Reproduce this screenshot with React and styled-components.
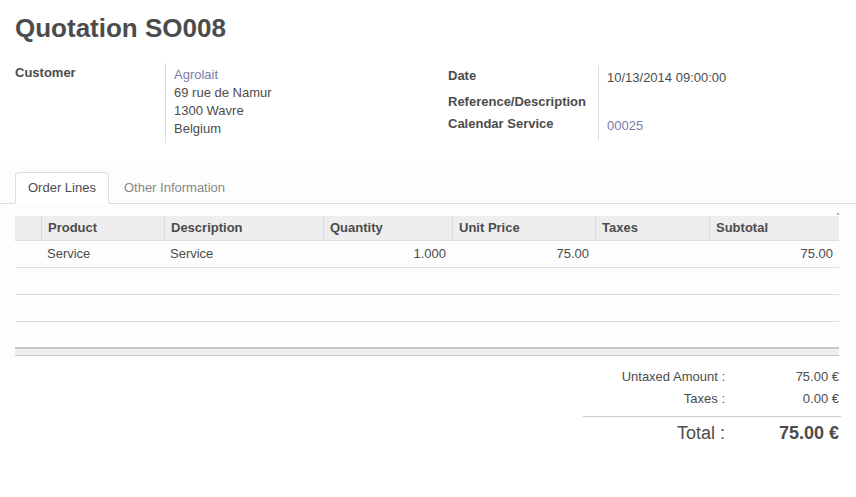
import React from 'react'
import styled, { createGlobalStyle } from 'styled-components'

const GlobalStyle = createGlobalStyle`
    body {
        margin: 0;
        background: #fff;
        color: #4c4c4c;
        font-family: "Liberation Sans", Arial, sans-serif;
        font-size: 13px;
    }
`

const columns = [
    { key: 'handle', label: '', width: 26 },
    { key: 'product', label: 'Product', width: 123 },
    { key: 'description', label: 'Description', width: 159 },
    { key: 'quantity', label: 'Quantity', width: 129, numeric: true },
    { key: 'price', label: 'Unit Price', width: 143, numeric: true },
    { key: 'taxes', label: 'Taxes', width: 114 },
    { key: 'subtotal', label: 'Subtotal', width: 130, numeric: true },
]

const lines = [
    { handle: '', product: 'Service', description: 'Service', quantity: '1.000', price: '75.00', taxes: '', subtotal: '75.00' },
]

const App = () => {
    return (
        <Sheet>
            <GlobalStyle />
            <Title>Quotation SO008</Title>

            <InfoGrid>
                <FieldGroup>
                    <Label>Customer</Label>
                    <Value>
                        <Link>Agrolait</Link>
                        <div>69 rue de Namur</div>
                        <div>1300 Wavre</div>
                        <div>Belgium</div>
                    </Value>
                </FieldGroup>
                <FieldGroup $offset={3}>
                    <Label>Date</Label>
                    <Value>10/13/2014 09:00:00</Value>
                    <Label>Reference/Description</Label>
                    <Value />
                    <Label>Calendar Service</Label>
                    <Value><Link>00025</Link></Value>
                </FieldGroup>
            </InfoGrid>

            <Notebook>
                <TabList>
                    <Tab $active>Order Lines</Tab>
                    <Tab>Other Information</Tab>
                </TabList>
                <TabContent>
                    <TableWrap>
                        <Table>
                            <colgroup>
                                {columns.map(col => <col key={col.key} style={{ width: col.width }} />)}
                            </colgroup>
                            <thead>
                                <tr>
                                    {columns.map((col, i) => (
                                        <HeadCell key={col.key} $first={i === 0}>{col.label}</HeadCell>
                                    ))}
                                </tr>
                            </thead>
                            <tbody>
                                {lines.map((line, r) => (
                                    <tr key={r}>
                                        {columns.map(col => (
                                            <Cell key={col.key} $numeric={col.numeric}>{line[col.key]}</Cell>
                                        ))}
                                    </tr>
                                ))}
                                {[0, 1].map(r => (
                                    <tr key={'empty' + r}>
                                        {columns.map(col => <Cell key={col.key}>&nbsp;</Cell>)}
                                    </tr>
                                ))}
                                <tr>
                                    <SpacerCell colSpan={columns.length} />
                                </tr>
                            </tbody>
                            <tfoot>
                                <tr>
                                    <FootCell colSpan={columns.length} />
                                </tr>
                            </tfoot>
                        </Table>
                    </TableWrap>
                </TabContent>
            </Notebook>

            <Totals>
                <TotalLabel>Untaxed Amount :</TotalLabel>
                <TotalValue>75.00 €</TotalValue>
                <TotalLabel>Taxes :</TotalLabel>
                <TotalValue>0.00 €</TotalValue>
                <Divider />
                <TotalLabel $big>Total :</TotalLabel>
                <TotalValue $big>75.00 €</TotalValue>
            </Totals>
        </Sheet>
    )
}

export default App

const Sheet = styled.div`
    width: 856px;
    min-height: 497px;
`

const Title = styled.h1`
    margin: 0;
    padding: 13px 15px 0;
    font-size: 26px;
    line-height: 30px;
    font-weight: bold;
    color: #4c4c4c;
`

const InfoGrid = styled.div`
    display: grid;
    grid-template-columns: 415px 1fr;
    column-gap: 18px;
    align-items: start;
    padding: 0 15px;
    margin-top: 20px;
`

const FieldGroup = styled.div`
    display: grid;
    grid-template-columns: 150px 1fr;
    margin-top: ${p => p.$offset || 0}px;
`

const Label = styled.div`
    font-weight: bold;
    line-height: 18px;
    padding: 1px 0 3px;
`

const Value = styled.div`
    line-height: 18px;
    padding: 3px 0 5px 8px;
    border-left: 1px solid #dcdcdc;
`

const Link = styled.div`
    color: #7c7bad;
`

const Notebook = styled.div`
    margin-top: 17px;
    padding-top: 12px;
    background: #fdfdfd;
`

const TabList = styled.div`
    display: flex;
    padding: 0 15px;
    border-bottom: 1px solid #dddddd;
`

const Tab = styled.div`
    margin: 0 2px -1px 0;
    padding: 6px 12px;
    line-height: 18px;
    border: 1px solid ${p => (p.$active ? '#dddddd' : 'transparent')};
    border-bottom-color: ${p => (p.$active ? '#ffffff' : 'transparent')};
    border-radius: 4px 4px 0 0;
    background: ${p => (p.$active ? '#ffffff' : 'transparent')};
    color: ${p => (p.$active ? '#4c4c4c' : '#888888')};
`

const TabContent = styled.div`
    padding: 12px 17px 1px 15px;
`

const TableWrap = styled.div`
    position: relative;

    &::after {
        content: '';
        position: absolute;
        top: -3px;
        right: 0;
        width: 2px;
        height: 2px;
        background: #b0b0b0;
    }
`

const Table = styled.table`
    width: 100%;
    table-layout: fixed;
    border-collapse: separate;
    border-spacing: 0;
`

const HeadCell = styled.th`
    padding: 3px 6px;
    line-height: 18px;
    text-align: left;
    font-weight: bold;
    background: #eeeeee;
    border-bottom: 1px solid #dddddd;
    border-left: ${p => (p.$first ? 'none' : '1px solid #dcdcdc')};
    white-space: nowrap;
`

const Cell = styled.td`
    padding: 4px 6px;
    line-height: 18px;
    text-align: ${p => (p.$numeric ? 'right' : 'left')};
    border-bottom: 1px solid #dddddd;
    white-space: nowrap;
`

const SpacerCell = styled.td`
    height: 25px;
    padding: 0;
`

const FootCell = styled.td`
    height: 6px;
    padding: 0;
    background: #eeeeee;
    border-top: 2px solid #c6c6c6;
    border-bottom: 1px solid #c8c8c8;
`

const Totals = styled.div`
    display: grid;
    grid-template-columns: 142px 114px;
    justify-content: end;
    padding-right: 17px;
    margin-top: 9px;
`

const TotalLabel = styled.div`
    text-align: right;
    line-height: ${p => (p.$big ? '32px' : '22px')};
    font-size: ${p => (p.$big ? '18px' : '13px')};
`

const TotalValue = styled.div`
    text-align: right;
    line-height: ${p => (p.$big ? '32px' : '22px')};
    font-size: ${p => (p.$big ? '18px' : '13px')};
    font-weight: ${p => (p.$big ? 'bold' : 'normal')};
`

const Divider = styled.div`
    grid-column: 1 / -1;
    margin-top: 6px;
    margin-right: -2px;
    border-top: 1px solid #cccccc;
`
